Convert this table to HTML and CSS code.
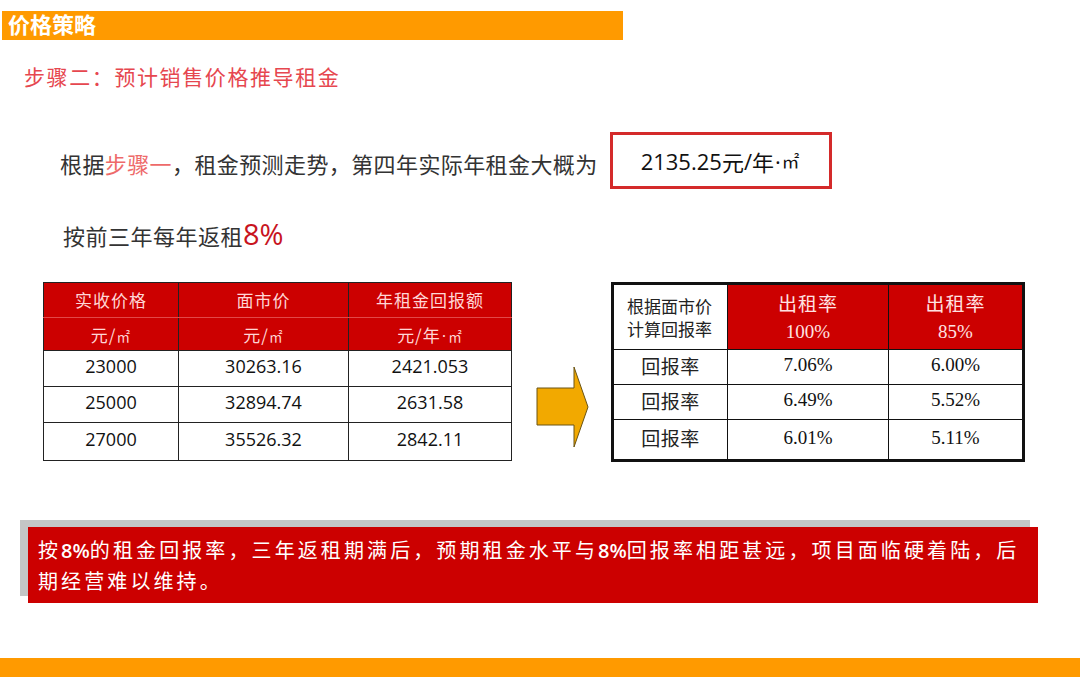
FILE: index.html
```html
<!DOCTYPE html>
<html lang="zh-CN">
<head>
<meta charset="utf-8">
<title>价格策略</title>
<link rel="stylesheet" href="styles.css">
</head>
<body>
<div class="page">
  <div class="topbar">价格策略</div>
  <div class="subtitle">步骤二：预计销售价格推导租金</div>
  <div class="line1">
    <span class="txt">根据<span class="hl">步骤一</span>，租金预测走势，第四年实际年租金大概为</span>
    <div class="rentbox"><span class="num">2135.25</span>元<span class="num">/</span>年<span class="dot">·</span><span class="unit">㎡</span></div>
  </div>
  <div class="line2">按前三年每年返租<span class="big">8%</span></div>

  <div class="tables">
    <table class="tleft">
      <tr class="h1"><th>实收价格</th><th>面市价</th><th>年租金回报额</th></tr>
      <tr class="h2"><th>元/<span class="unit">㎡</span></th><th>元/<span class="unit">㎡</span></th><th>元/年<span class="dot">·</span><span class="unit">㎡</span></th></tr>
      <tr class="r1"><td>23000</td><td>30263.16</td><td>2421.053</td></tr>
      <tr class="r2"><td>25000</td><td>32894.74</td><td>2631.58</td></tr>
      <tr class="r3"><td>27000</td><td>35526.32</td><td>2842.11</td></tr>
    </table>

    <svg class="arrow" width="54" height="82" viewBox="0 0 54 82">
      <polygon points="1,22 38,22 38,1 52,41 38,81 38,59 1,59" fill="#F2A900" stroke="#6b5414" stroke-width="1"/>
    </svg>

    <table class="tright">
      <tr class="hr">
        <th class="corner">根据面市价<br>计算回报率</th>
        <th class="red"><div>出租率</div><div class="sn">100%</div></th>
        <th class="red"><div>出租率</div><div class="sn">85%</div></th>
      </tr>
      <tr class="d1"><td class="lab">回报率</td><td>7.06%</td><td>6.00%</td></tr>
      <tr class="d2"><td class="lab">回报率</td><td>6.49%</td><td>5.52%</td></tr>
      <tr class="d3"><td class="lab">回报率</td><td>6.01%</td><td>5.11%</td></tr>
    </table>
  </div>

  <div class="note">按<b>8%</b>的租金回报率，三年返租期满后，预期租金水平与<b>8%</b>回报率相距甚远，项目面临硬着陆，后期经营难以维持。</div>

  <div class="footbar"></div>
</div>
</body>
</html>
```

FILE: styles.css
```css
html, body {
  margin: 0;
  padding: 0;
  background: #ffffff;
}
body {
  font-family: "Noto Sans CJK SC", "Open Sans", sans-serif;
  color: #333333;
}
.page {
  width: 1080px;
  height: 677px;
  display: flex;
  flex-direction: column;
  overflow: hidden;
}
.topbar {
  margin: 11px 0 0 2px;
  width: 615px;
  height: 29px;
  padding-left: 6px;
  background: #FF9A00;
  color: #ffffff;
  font-weight: bold;
  font-size: 22px;
  line-height: 25px;
}
.subtitle {
  margin-top: 24px;
  padding-left: 24px;
  font-size: 21px;
  line-height: 24px;
  letter-spacing: 1.6px;
  color: #E6474F;
}
.line1 {
  margin-top: 44px;
  padding-left: 60px;
  display: flex;
  align-items: center;
}
.line1 .txt {
  font-size: 22px;
  letter-spacing: 0.4px;
  color: #333333;
  line-height: 30px;
  padding-top: 5px;
}
.hl {
  color: #EE6A6A;
}
.rentbox {
  margin-left: 12px;
  width: 188px;
  height: 51px;
  border: 3px solid #D42A2A;
  padding-left: 28px;
  display: flex;
  align-items: center;
  font-size: 22px;
  color: #111111;
}
.num {
  font-family: "Open Sans", sans-serif;
}
.dot {
  font-family: "Open Sans", sans-serif;
  padding: 0 1px;
}
.unit {
  font-size: 0.8em;
}
.line2 {
  margin-top: 29px;
  padding-left: 63px;
  font-size: 22px;
  line-height: 32px;
  letter-spacing: 0.5px;
  color: #333333;
}
.line2 .big {
  font-family: "Open Sans", sans-serif;
  font-size: 29px;
  color: #C8141E;
  letter-spacing: 0;
}
.tables {
  margin-top: 31px;
  display: flex;
  align-items: flex-start;
}
table {
  border-collapse: collapse;
}
.tleft {
  margin-left: 43px;
  width: 469px;
}
.tleft th, .tleft td {
  border: 1px solid #222222;
  text-align: center;
  padding: 0;
}
.tleft th {
  background: #CC0000;
  color: #FFD6D6;
  font-weight: normal;
  font-size: 17px;
  letter-spacing: 1px;
}
.tleft th:nth-child(1) { width: 134px; }
.tleft th:nth-child(2) { width: 169px; }
.tleft .h1 th {
  height: 32px;
  border-bottom: 1px solid #E24848;
  padding-bottom: 2px;
}
.tleft .h2 th {
  height: 32px;
  border-top: 1px solid #E24848;
}
.tleft td {
  font-family: "Open Sans", sans-serif;
  font-size: 18px;
  color: #111111;
  padding-bottom: 6px;
}
.tleft .r1 td { height: 29px; }
.tleft .r2 td { height: 29px; }
.tleft .r3 td { height: 31px; }

.arrow {
  margin: 84px 21px 0 24px;
  flex: none;
}
.tright {
  width: 414px;
  border: 3px solid #111111;
}
.tright th, .tright td {
  border: 1px solid #111111;
  padding: 0;
  text-align: center;
  font-weight: normal;
}
.tright .hr th {
  height: 64px;
  vertical-align: middle;
}
.tright .corner {
  width: 100px;
  text-align: left;
  padding-left: 13px;
  font-size: 17px;
  line-height: 23px;
  color: #222222;
  background: #ffffff;
}
.tright th.red {
  background: #CC0000;
  color: #FFE2E2;
  font-size: 19px;
  line-height: 29px;
  letter-spacing: 1px;
}
.tright th.red:nth-child(2) { width: 160px; }
.tright .sn {
  font-family: "Liberation Serif", serif;
  font-size: 19px;
  letter-spacing: 0;
}
.tright td {
  font-family: "Liberation Serif", serif;
  font-size: 19px;
  color: #111111;
  padding-bottom: 4px;
}
.tright td.lab {
  font-family: "Noto Sans CJK SC", sans-serif;
  font-size: 19px;
  color: #222222;
  letter-spacing: 0.5px;
}
.tright .d1 td { height: 30px; }
.tright .d2 td { height: 30px; }
.tright .d3 td { height: 35px; }

.note {
  box-sizing: border-box;
  margin: 65px 0 0 28px;
  width: 1010px;
  height: 76px;
  padding: 8px 12px 0 10px;
  background: #CC0000;
  box-shadow: -8px -7px 0 #C4C6C6;
  color: #ffffff;
  font-size: 20px;
  line-height: 30px;
  letter-spacing: 3.1px;
}
.note b {
  font-family: "Open Sans", sans-serif;
  font-weight: 600;
  letter-spacing: 0;
}
.footbar {
  margin-top: auto;
  height: 19px;
  background: #FF9A00;
}
```
